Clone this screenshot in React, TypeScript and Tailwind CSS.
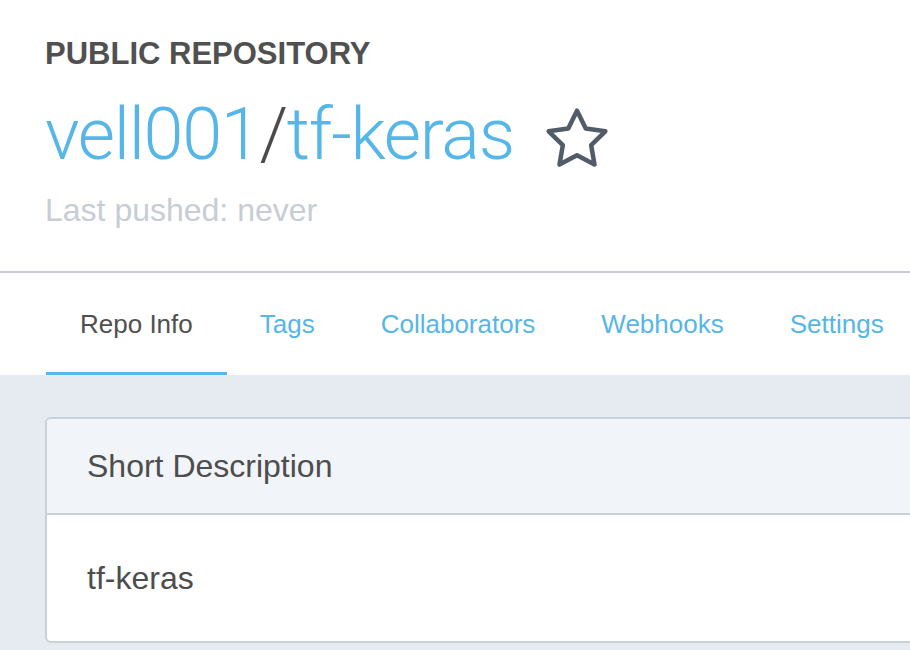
import React from "react";

const tabs = ["Repo Info", "Tags", "Collaborators", "Webhooks", "Settings"];

function StarIcon() {
  return (
    <svg
      viewBox="0 0 24 24"
      className="h-[68px] w-[68px] shrink-0"
      fill="none"
      stroke="#525c69"
      strokeWidth={1.6}
      strokeLinejoin="round"
    >
      <polygon points="12 2 15.09 8.26 22 9.27 17 14.14 18.18 21.02 12 17.77 5.82 21.02 7 14.14 2 9.27 8.91 8.26" />
    </svg>
  );
}

export default function App() {
  return (
    <div className="w-[910px] h-[650px] overflow-hidden bg-white font-['Liberation_Sans',Arial,sans-serif]">
      {/* Repo header */}
      <header className="h-[271px] pl-[45px] pt-[38px]">
        <div className="text-[31px] leading-none font-bold text-[#505050]">PUBLIC REPOSITORY</div>
        <div className="mt-[30px] flex h-[74px] items-center">
          <h1 className="-mt-[2px] text-[72px] leading-none font-light font-['Roboto',sans-serif] text-[#56b6e7] tracking-[-1.3px] whitespace-nowrap">
            vell001<span className="text-[#4a4a4a]">/</span>tf-keras
          </h1>
          <div className="ml-[29px] mt-[6px]">
            <StarIcon />
          </div>
        </div>
        <div className="mt-[21px] text-[32px] leading-none text-[#c7ccd5] whitespace-nowrap">Last pushed: never</div>
      </header>

      <div className="h-[2px] bg-[#c6cad1]" />

      {/* Tabs */}
      <nav className="flex h-[102px] pl-[46px] bg-white">
        {tabs.map((t, i) => (
          <div
            key={t}
            className={
              i === 0
                ? "flex shrink-0 items-center whitespace-nowrap px-[34px] pt-[2px] text-[26px] leading-none text-[#4f4f4f] border-b-[3px] border-[#58b8e9]"
                : "flex shrink-0 items-center whitespace-nowrap px-[33px] pt-[2px] text-[26px] leading-none text-[#56b6e7] border-b-[3px] border-transparent"
            }
          >
            {t}
          </div>
        ))}
      </nav>

      {/* Content */}
      <main className="h-full bg-[#e6ebf2] pl-[45px] pt-[42px]">
        <section className="w-[920px] rounded-[6px] border-2 border-[#c9d0da] bg-white overflow-hidden">
          <div className="flex h-[96px] items-center px-[40px] bg-[#f1f4f9] border-b-2 border-[#c9d0da] text-[32px] leading-none text-[#4d4d4d]">
            Short Description
          </div>
          <div className="flex h-[126px] items-center px-[40px] text-[32px] leading-none text-[#4d4d4d]">
            tf-keras
          </div>
        </section>
      </main>
    </div>
  );
}
